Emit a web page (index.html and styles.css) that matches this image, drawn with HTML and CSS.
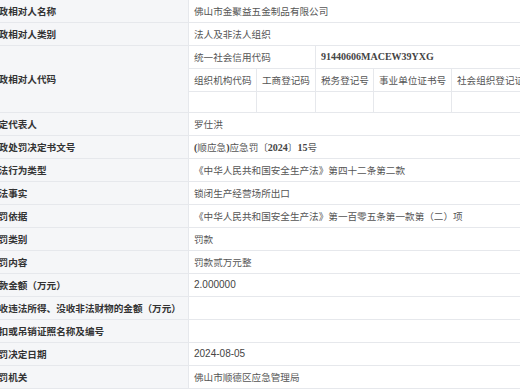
FILE: index.html
```html
<!DOCTYPE html>
<html lang="zh-CN">
<head>
<meta charset="utf-8">
<link rel="stylesheet" href="styles.css">
</head>
<body>
<table class="info">
  <colgroup>
    <col class="c-label"><col class="c1"><col class="c2"><col class="c3"><col class="c4"><col class="c5">
  </colgroup>
  <tr><th>行政相对人名称</th><td colspan="5">佛山市金聚益五金制品有限公司</td></tr>
  <tr><th>行政相对人类别</th><td colspan="5">法人及非法人组织</td></tr>
  <tr><th rowspan="3">行政相对人代码</th><td colspan="2">统一社会信用代码</td><td colspan="3" class="num">91440606MACEW39YXG</td></tr>
  <tr><td>组织机构代码</td><td>工商登记码</td><td>税务登记号</td><td>事业单位证书号</td><td>社会组织登记证号</td></tr>
  <tr class="empty"><td></td><td></td><td></td><td></td><td></td></tr>
  <tr><th>法定代表人</th><td colspan="5">罗仕洪</td></tr>
  <tr><th>行政处罚决定书文号</th><td colspan="5"><span class="num">(</span>顺应急<span class="num">)</span>应急罚〔<span class="num">2024</span>〕<span class="num">15</span>号</td></tr>
  <tr><th>违法行为类型</th><td colspan="5">《中华人民共和国安全生产法》第四十二条第二款</td></tr>
  <tr><th>违法事实</th><td colspan="5">锁闭生产经营场所出口</td></tr>
  <tr><th>处罚依据</th><td colspan="5">《中华人民共和国安全生产法》第一百零五条第一款第（二）项</td></tr>
  <tr><th>处罚类别</th><td colspan="5">罚款</td></tr>
  <tr><th>处罚内容</th><td colspan="5">罚款贰万元整</td></tr>
  <tr><th>罚款金额（万元）</th><td colspan="5" class="plain">2.000000</td></tr>
  <tr><th>没收违法所得、没收非法财物的金额（万元）</th><td colspan="5"></td></tr>
  <tr><th>暂扣或吊销证照名称及编号</th><td colspan="5"></td></tr>
  <tr><th>处罚决定日期</th><td colspan="5" class="plain">2024-08-05</td></tr>
  <tr><th>处罚机关</th><td colspan="5">佛山市顺德区应急管理局</td></tr>
</table>
</body>
</html>
```
FILE: styles.css
```css
html, body {
  margin: 0;
  padding: 0;
  background: #ffffff;
  overflow: hidden;
  width: 520px;
  height: 390px;
}
.info {
  border-collapse: collapse;
  table-layout: fixed;
  width: 594px;
  margin-left: -22px;
  margin-top: -1px;
  font-family: "Noto Sans CJK SC", "Noto Sans", sans-serif;
  font-size: 9.6px;
  color: #555;
}
.c-label { width: 210px; }
.c1 { width: 68px; }
.c2 { width: 59px; }
.c3 { width: 58px; }
.c4 { width: 78px; }
.c5 { width: 121px; }
.info th, .info td {
  border: 1px solid #e6e8ec;
  height: 22px;
  padding: 0 0 0 5px;
  text-align: left;
  vertical-align: middle;
  white-space: nowrap;
  overflow: hidden;
  line-height: 12px;
}
.info th {
  background: #f5f6f8;
  color: #333;
  font-weight: 700;
  padding-left: 10px;
}
.info tr.empty td { height: 20px; }
.num {
  font-family: "Liberation Serif", serif;
  font-size: 10px;
  font-weight: 700;
  color: #444;
}
.plain {
  font-family: "Liberation Sans", sans-serif;
  color: #444;
  font-size: 10px;
}
```
